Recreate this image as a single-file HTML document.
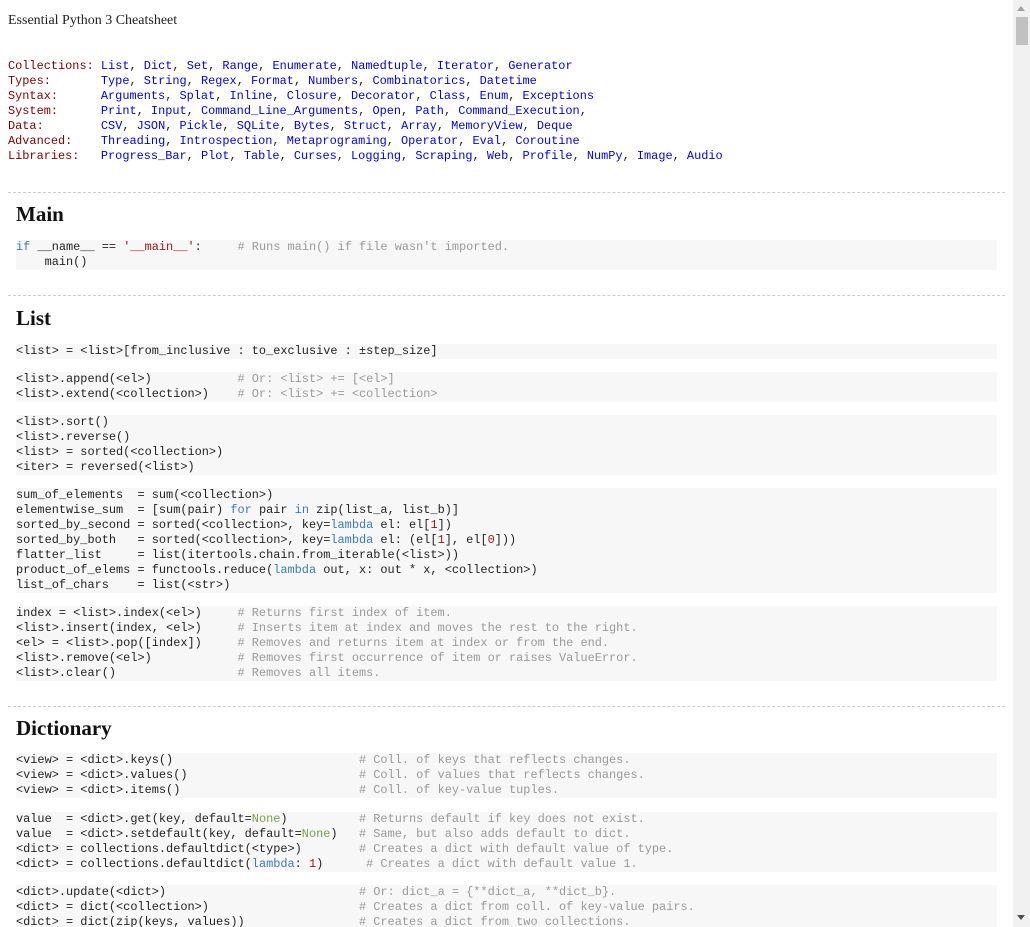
<!DOCTYPE html>
<html><head><meta charset="utf-8"><style>
html,body{margin:0;padding:0;background:#fff;width:1030px;height:927px;overflow:hidden;position:relative}
.t{position:absolute;left:8px;top:13px;font:14px "Liberation Serif",serif;color:#222}
pre{margin:0;font:11.92px/15px "Liberation Mono",monospace;color:#222;white-space:pre}
.idx{position:absolute;left:8px;top:59px}
.idx b{font-weight:normal;color:#800000}
.idx a{color:#0000ee;text-decoration:none}
.hr{position:absolute;left:8px;width:997px;border-top:1px dashed #ccc;height:0}
h2{position:absolute;left:16px;margin:0;font:bold 21px/24px "Liberation Serif",serif;color:#111}
.c{position:absolute;left:16px;width:981px;background:#f7f7f7}
.k{color:#3a7bc0}.n{color:#a31515}.g{color:#999}.v{color:#7a9f4a}
.sb{position:absolute;right:0;top:0;width:17px;height:927px;background:#f1f1f1}
.th{position:absolute;left:3px;top:17px;width:12px;height:28px;background:#c1c1c1}
.ar{position:absolute;left:4px;width:0;height:0;border-left:4px solid transparent;border-right:4px solid transparent}
</style></head><body>
<div class="t">Essential Python 3 Cheatsheet</div>
<pre class="idx"><b>Collections:</b> <a>List</a>, <a>Dict</a>, <a>Set</a>, <a>Range</a>, <a>Enumerate</a>, <a>Namedtuple</a>, <a>Iterator</a>, <a>Generator</a>
<b>Types:</b>       <a>Type</a>, <a>String</a>, <a>Regex</a>, <a>Format</a>, <a>Numbers</a>, <a>Combinatorics</a>, <a>Datetime</a>
<b>Syntax:</b>      <a>Arguments</a>, <a>Splat</a>, <a>Inline</a>, <a>Closure</a>, <a>Decorator</a>, <a>Class</a>, <a>Enum</a>, <a>Exceptions</a>
<b>System:</b>      <a>Print</a>, <a>Input</a>, <a>Command_Line_Arguments</a>, <a>Open</a>, <a>Path</a>, <a>Command_Execution</a>,
<b>Data:</b>        <a>CSV</a>, <a>JSON</a>, <a>Pickle</a>, <a>SQLite</a>, <a>Bytes</a>, <a>Struct</a>, <a>Array</a>, <a>MemoryView</a>, <a>Deque</a>
<b>Advanced:</b>    <a>Threading</a>, <a>Introspection</a>, <a>Metaprograming</a>, <a>Operator</a>, <a>Eval</a>, <a>Coroutine</a>
<b>Libraries:</b>   <a>Progress_Bar</a>, <a>Plot</a>, <a>Table</a>, <a>Curses</a>, <a>Logging</a>, <a>Scraping</a>, <a>Web</a>, <a>Profile</a>, <a>NumPy</a>, <a>Image</a>, <a>Audio</a></pre>

<div class="hr" style="top:192px"></div>
<h2 style="top:202px">Main</h2>
<pre class="c" style="top:240px"><span class="k">if</span> __name__ == <span class="n">'__main__'</span>:     <span class="g"># Runs main() if file wasn't imported.</span>
    main()</pre>

<div class="hr" style="top:295px"></div>
<h2 style="top:306px">List</h2>
<pre class="c" style="top:344px">&lt;list&gt; = &lt;list&gt;[from_inclusive : to_exclusive : ±step_size]</pre>
<pre class="c" style="top:372px">&lt;list&gt;.append(&lt;el&gt;)            <span class="g"># Or: &lt;list&gt; += [&lt;el&gt;]</span>
&lt;list&gt;.extend(&lt;collection&gt;)    <span class="g"># Or: &lt;list&gt; += &lt;collection&gt;</span></pre>
<pre class="c" style="top:415px">&lt;list&gt;.sort()
&lt;list&gt;.reverse()
&lt;list&gt; = sorted(&lt;collection&gt;)
&lt;iter&gt; = reversed(&lt;list&gt;)</pre>
<pre class="c" style="top:488px">sum_of_elements  = sum(&lt;collection&gt;)
elementwise_sum  = [sum(pair) <span class="k">for</span> pair <span class="k">in</span> zip(list_a, list_b)]
sorted_by_second = sorted(&lt;collection&gt;, key=<span class="k">lambda</span> el: el[<span class="n">1</span>])
sorted_by_both   = sorted(&lt;collection&gt;, key=<span class="k">lambda</span> el: (el[<span class="n">1</span>], el[<span class="n">0</span>]))
flatter_list     = list(itertools.chain.from_iterable(&lt;list&gt;))
product_of_elems = functools.reduce(<span class="k">lambda</span> out, x: out * x, &lt;collection&gt;)
list_of_chars    = list(&lt;str&gt;)</pre>
<pre class="c" style="top:606px">index = &lt;list&gt;.index(&lt;el&gt;)     <span class="g"># Returns first index of item.</span>
&lt;list&gt;.insert(index, &lt;el&gt;)     <span class="g"># Inserts item at index and moves the rest to the right.</span>
&lt;el&gt; = &lt;list&gt;.pop([index])     <span class="g"># Removes and returns item at index or from the end.</span>
&lt;list&gt;.remove(&lt;el&gt;)            <span class="g"># Removes first occurrence of item or raises ValueError.</span>
&lt;list&gt;.clear()                 <span class="g"># Removes all items.</span></pre>

<div class="hr" style="top:706px"></div>
<h2 style="top:716px">Dictionary</h2>
<pre class="c" style="top:753px">&lt;view&gt; = &lt;dict&gt;.keys()                          <span class="g"># Coll. of keys that reflects changes.</span>
&lt;view&gt; = &lt;dict&gt;.values()                        <span class="g"># Coll. of values that reflects changes.</span>
&lt;view&gt; = &lt;dict&gt;.items()                         <span class="g"># Coll. of key-value tuples.</span></pre>
<pre class="c" style="top:812px">value  = &lt;dict&gt;.get(key, default=<span class="v">None</span>)          <span class="g"># Returns default if key does not exist.</span>
value  = &lt;dict&gt;.setdefault(key, default=<span class="v">None</span>)   <span class="g"># Same, but also adds default to dict.</span>
&lt;dict&gt; = collections.defaultdict(&lt;type&gt;)        <span class="g"># Creates a dict with default value of type.</span>
&lt;dict&gt; = collections.defaultdict(<span class="k">lambda</span>: <span class="n">1</span>)      <span class="g"># Creates a dict with default value 1.</span></pre>
<pre class="c" style="top:885px">&lt;dict&gt;.update(&lt;dict&gt;)                           <span class="g"># Or: dict_a = {**dict_a, **dict_b}.</span>
&lt;dict&gt; = dict(&lt;collection&gt;)                     <span class="g"># Creates a dict from coll. of key-value pairs.</span>
&lt;dict&gt; = dict(zip(keys, values))                <span class="g"># Creates a dict from two collections.</span></pre>

<div class="sb"><div class="ar" style="top:6px;border-bottom:5px solid #a3a3a3"></div><div class="th"></div><div class="ar" style="top:915px;border-top:5px solid #505050"></div></div>
</body></html>
